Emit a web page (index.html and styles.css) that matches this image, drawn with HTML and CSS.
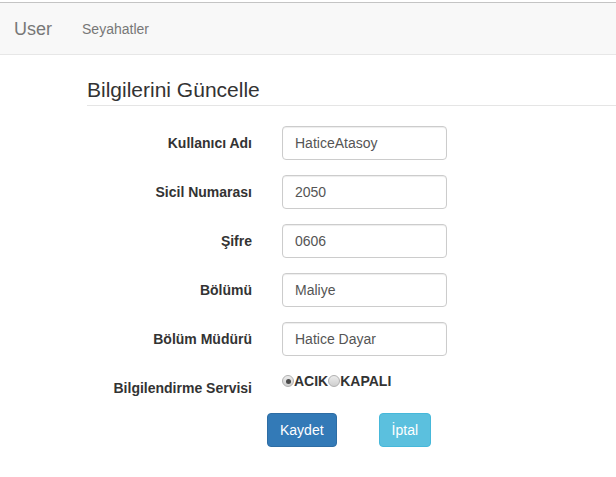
FILE: index.html
```html
<!DOCTYPE html>
<html lang="tr">
<head>
<meta charset="utf-8">
<title>Bilgilerini Güncelle</title>
<link rel="stylesheet" href="styles.css">
</head>
<body>
<nav class="navbar">
  <a class="brand" href="#">User</a>
  <a class="nav-link" href="#">Seyahatler</a>
</nav>
<main class="content">
  <h2 class="legend">Bilgilerini Güncelle</h2>
  <form class="form">
    <div class="row">
      <label class="label">Kullanıcı Adı</label>
      <input class="input" type="text" value="HaticeAtasoy">
    </div>
    <div class="row">
      <label class="label">Sicil Numarası</label>
      <input class="input" type="text" value="2050">
    </div>
    <div class="row">
      <label class="label">Şifre</label>
      <input class="input" type="text" value="0606">
    </div>
    <div class="row">
      <label class="label">Bölümü</label>
      <input class="input" type="text" value="Maliye">
    </div>
    <div class="row">
      <label class="label">Bölüm Müdürü</label>
      <input class="input" type="text" value="Hatice Dayar">
    </div>
    <div class="row radio-row">
      <label class="label label-radio">Bilgilendirme Servisi</label>
      <div class="radios">
        <span class="radio checked"></span><span class="radio-text">ACIK</span><span class="radio"></span><span class="radio-text">KAPALI</span>
      </div>
    </div>
    <div class="actions">
      <button type="button" class="btn btn-primary">Kaydet</button>
      <button type="button" class="btn btn-info">İptal</button>
    </div>
  </form>
</main>
</body>
</html>
```
FILE: styles.css
```css
* { box-sizing: border-box; }
html, body { margin: 0; padding: 0; background: #fff; }
body {
  font-family: "Liberation Sans", Arial, sans-serif;
  font-size: 14px;
  line-height: 20px;
  color: #333;
  padding-top: 2px;
}
.navbar {
  display: flex;
  align-items: center;
  height: 53px;
  background: #f8f8f8;
  border-top: 1px solid #c4c4c4;
  border-bottom: 1px solid #e7e7e7;
  padding-left: 14px;
}
.brand {
  font-size: 18px;
  color: #777;
  text-decoration: none;
  margin-right: 30px;
}
.nav-link {
  font-size: 14px;
  color: #777;
  text-decoration: none;
}
.content {
  padding-left: 87px;
  padding-top: 20px;
}
.legend {
  margin: 0 0 20px 0;
  font-size: 21px;
  font-weight: normal;
  line-height: 30px;
  color: #333;
  border-bottom: 1px solid #e5e5e5;
}
.form { display: flex; flex-direction: column; }
.row {
  display: grid;
  grid-template-columns: 165px 165px;
  column-gap: 30px;
  margin-bottom: 15px;
}
.label {
  text-align: right;
  font-weight: bold;
  padding-top: 7px;
  padding-right: 0;
  color: #333;
}
.input {
  height: 34px;
  width: 165px;
  padding: 6px 12px;
  font-family: inherit;
  font-size: 14px;
  color: #555;
  background: #fff;
  border: 1px solid #ccc;
  border-radius: 4px;
  box-shadow: inset 0 1px 1px rgba(0,0,0,.075);
}
.radio-row { margin-bottom: 15px; }
.radios {
  display: flex;
  align-items: center;
  height: 20px;
  font-weight: bold;
  margin-top: 0;
}
.radio {
  display: inline-block;
  width: 12px;
  height: 12px;
  border-radius: 50%;
  border: 1px solid #b0b0b0;
  background: linear-gradient(#ececec, #cfcfcf);
  position: relative;
}
.radio.checked::after {
  content: "";
  position: absolute;
  left: 2.5px;
  top: 2.5px;
  width: 5px;
  height: 5px;
  border-radius: 50%;
  background: #4a4a4a;
}
.radio-text { color: #333; }
.actions {
  display: flex;
  padding-left: 180px;
  gap: 42px;
}
.btn {
  height: 34px;
  padding: 6px 12px;
  font-family: inherit;
  font-size: 14px;
  line-height: 20px;
  color: #fff;
  border-radius: 4px;
  border: 1px solid transparent;
}
.btn-primary { background: #337ab7; border-color: #2e6da4; }
.btn-info { background: #5bc0de; border-color: #46b8da; }
```
